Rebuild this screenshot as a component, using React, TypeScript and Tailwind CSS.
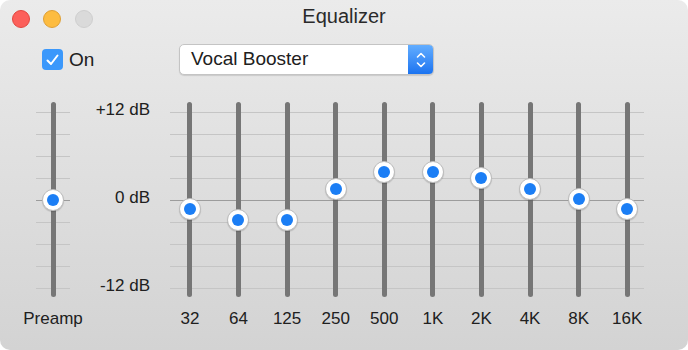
import React from 'react';

const BANDS = [
    { label: '32', gain: -1.2 },
    { label: '64', gain: -2.7 },
    { label: '125', gain: -2.7 },
    { label: '250', gain: 1.5 },
    { label: '500', gain: 3.8 },
    { label: '1K', gain: 3.8 },
    { label: '2K', gain: 3 },
    { label: '4K', gain: 1.5 },
    { label: '8K', gain: 0.1 },
    { label: '16K', gain: -1.2 },
];

const PX_PER_DB = 7.333;

// 9 tick lines, 22px apart, 0 dB in the middle is darker
const Ticks = () => (
    <div className="flex flex-col gap-[21px] pt-[10px]">
        {[0, 1, 2, 3, 4, 5, 6, 7, 8].map(i => (
            <div key={i} className={i === 4 ? 'h-px bg-[#9c9c9c]' : 'h-px bg-[#c5c5c5]'} />
        ))}
    </div>
);

const Slider = ({ gain }: { gain: number }) => (
    <div className="relative h-[195px] w-full flex justify-center">
        <div className="w-[5px] h-full rounded-full bg-[#767676]" />
        <div
            className="absolute left-1/2 -translate-x-1/2 w-[22px] h-[22px] rounded-full bg-white border border-[#bcbcbc] shadow-[0_1px_1px_rgba(0,0,0,0.15)] flex items-center justify-center"
            style={{ top: 98 - gain * PX_PER_DB - 11 }}
        >
            <div className="w-[12px] h-[12px] rounded-full bg-[#1b7ef5]" />
        </div>
    </div>
);

const App = () => {
    return (
        <div className="w-[688px] h-[350px] bg-white" style={{ fontFamily: '"Liberation Sans", Arial, sans-serif' }}>
            <div className="w-full h-full rounded-[10px] overflow-hidden bg-gradient-to-b from-[#ebebeb] to-[#d3d3d3] text-[#202020]">
                {/* title bar */}
                <div className="grid grid-cols-[1fr_auto_1fr] h-[44px]">
                    <div className="flex gap-[13.5px] pl-[11.5px] pt-[10px]">
                        <div className="w-[18px] h-[18px] rounded-full bg-[#fc605b] border border-[#e2463f]" />
                        <div className="w-[18px] h-[18px] rounded-full bg-[#fdbc40] border border-[#de9f34]" />
                        <div className="w-[18px] h-[18px] rounded-full bg-[#dadada] border border-[#cecece]" />
                    </div>
                    <div className="pt-[3px] text-[20px] leading-[26px] text-[#2a2a2a]">Equalizer</div>
                    <div />
                </div>

                {/* controls */}
                <div className="flex items-center h-[31px] pl-[42px]">
                    <div className="w-[137px] flex items-center">
                        <div className="w-[21px] h-[21px] rounded-[4px] bg-[#3b98fb] flex items-center justify-center">
                            <svg width="13" height="12" viewBox="0 0 13 12">
                                <path d="M1.5 6.5 L5 10 L11.5 1.5" fill="none" stroke="white" strokeWidth="2" strokeLinecap="round" strokeLinejoin="round" />
                            </svg>
                        </div>
                        <span className="ml-[6px] text-[19px] leading-[24px]">On</span>
                    </div>
                    <div className="w-[255px] h-[31px] flex rounded-[5px] bg-white border border-[#c4c4c4] shadow-[0_1px_1px_rgba(0,0,0,0.12)] overflow-hidden">
                        <div className="flex-1 flex items-center pl-[11px] text-[19px]">Vocal Booster</div>
                        <div className="w-[25px] h-full bg-gradient-to-b from-[#62adff] to-[#1a73f0] flex items-center justify-center">
                            <svg width="12" height="20" viewBox="0 0 12 20">
                                <path d="M2.5 7 L6 3.5 L9.5 7" fill="none" stroke="white" strokeWidth="1.6" strokeLinecap="round" strokeLinejoin="round" />
                                <path d="M2.5 13 L6 16.5 L9.5 13" fill="none" stroke="white" strokeWidth="1.6" strokeLinecap="round" strokeLinejoin="round" />
                            </svg>
                        </div>
                    </div>
                </div>

                {/* sliders */}
                <div className="flex pl-[23px] mt-[27px] text-[17px] leading-[20px]">
                    <div className="w-[60px] flex flex-col items-center">
                        <div className="relative w-full">
                            <div className="absolute top-0 left-[13px] right-[13px]">
                                <Ticks />
                            </div>
                            <Slider gain={0} />
                        </div>
                        <div className="mt-[12px]">Preamp</div>
                    </div>

                    <div className="w-[67px] -mt-[2px] h-[196px] flex flex-col justify-between items-end">
                        <span>+12 dB</span>
                        <span>0 dB</span>
                        <span>-12 dB</span>
                    </div>

                    <div className="relative ml-[15.6px] w-[486px] flex">
                        <div className="absolute top-0 left-[4px] right-[8px]">
                            <Ticks />
                        </div>
                        {BANDS.map(b => (
                            <div key={b.label} className="relative w-[48.6px] flex flex-col items-center">
                                <Slider gain={b.gain} />
                                <div className="mt-[12px]">{b.label}</div>
                            </div>
                        ))}
                    </div>
                </div>
            </div>
        </div>
    );
};

export default App;
